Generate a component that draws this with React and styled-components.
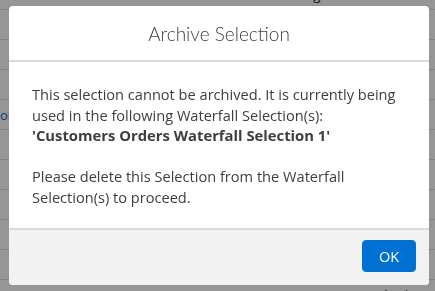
import React from 'react';
import styled, {createGlobalStyle} from 'styled-components';

const GlobalStyle = createGlobalStyle`
  html, body {
    margin: 0;
    padding: 0;
    background: #fff;
    overflow: hidden;
  }
  body {
    font-family: "Open Sans", Lato, sans-serif;
    color: #3e3e3c;
  }
`;

const rows = [
    ['', 'N/A', 'Egla Hanitas', ''],
    ['', '', '', ''],
    ['', '', '', ''],
    ['', '', '', ''],
    ['oi', '', '', ''],
    ['', '', '', ''],
    ['', '', '', ''],
    ['', '', '', ''],
    ['', '', '', ''],
    ['', '', '', ''],
    ['', '4/4/2021', 'Lorem', 'Charlie'],
];

const App = () => {
    return (
        <>
            <GlobalStyle/>
            <Page>
                <Table>
                    {rows.map((r, i) => (
                        <Row key={i}>
                            <LinkCell>{r[0]}</LinkCell>
                            <Cell width='95px'>{r[1]}</Cell>
                            <Cell width='70px'>{r[2]}</Cell>
                            <Cell width='58px'>{r[3]}</Cell>
                        </Row>
                    ))}
                </Table>
            </Page>
            <Backdrop/>
            <Modal role='dialog'>
                <Header>
                    <Title>Archive Selection</Title>
                </Header>
                <Content>
                    <p>
                        This selection cannot be archived. It is currently being
                        used in the following Waterfall Selection(s):
                        <br/>
                        <strong>'Customers Orders Waterfall Selection 1'</strong>
                    </p>
                    <p>
                        Please delete this Selection from the Waterfall
                        Selection(s) to proceed.
                    </p>
                </Content>
                <Footer>
                    <Button>OK</Button>
                </Footer>
            </Modal>
        </>
    )
}
export default App;

const Page = styled.div`
  width: 435px;
  height: 291px;
  overflow: hidden;
`;

const Table = styled.div`
  margin-top: -20px;
  display: flex;
  flex-direction: column;
`;

const Row = styled.div`
  display: flex;
  align-items: center;
  height: 30px;
  border-bottom: 1px solid #dddbda;
  box-sizing: border-box;
  font-size: 13px;
  color: #080707;
`;

const LinkCell = styled.div`
  width: 211px;
  color: #0070d2;
  white-space: nowrap;
`;

const Cell = styled.div`
  width: ${({width}) => width};
  white-space: nowrap;
  overflow: visible;
  flex-shrink: 0;
`;

const Backdrop = styled.div`
  position: fixed;
  inset: 0;
  background: rgba(0, 0, 0, 0.41);
`;

const Modal = styled.section`
  position: fixed;
  top: 6px;
  left: 9px;
  width: 420px;
  height: 279px;
  background: #fff;
  border-radius: 4px;
  display: flex;
  flex-direction: column;
  overflow: hidden;
`;

const Header = styled.header`
  height: 54px;
  border-bottom: 2px solid #dddbda;
  display: flex;
  align-items: center;
  justify-content: center;
  flex-shrink: 0;
`;

const Title = styled.h2`
  margin: 0;
  font-family: Lato, "Open Sans", sans-serif;
  font-size: 19px;
  font-weight: 300;
  color: #3e3e3c;
`;

const Content = styled.div`
  flex: 1;
  padding: 22px 23px 0 23px;
  font-size: 14.6px;
  line-height: 20.6px;
  color: #3e3e3c;

  p {
    margin: 0 0 20.6px;
  }

  strong {
    font-size: 14.8px;
    font-weight: 700;
  }
`;

const Footer = styled.footer`
  height: 54px;
  border-top: 2px solid #dddbda;
  background: #f3f2f2;
  display: flex;
  align-items: flex-start;
  justify-content: flex-end;
  padding: 10px 13px 0;
  flex-shrink: 0;
`;

const Button = styled.button`
  height: 32px;
  width: 54px;
  background: #0070d2;
  border: 1px solid #0070d2;
  border-radius: 4px;
  color: #fff;
  font-family: "Open Sans", Lato, sans-serif;
  font-size: 14.5px;
  cursor: pointer;
`;
